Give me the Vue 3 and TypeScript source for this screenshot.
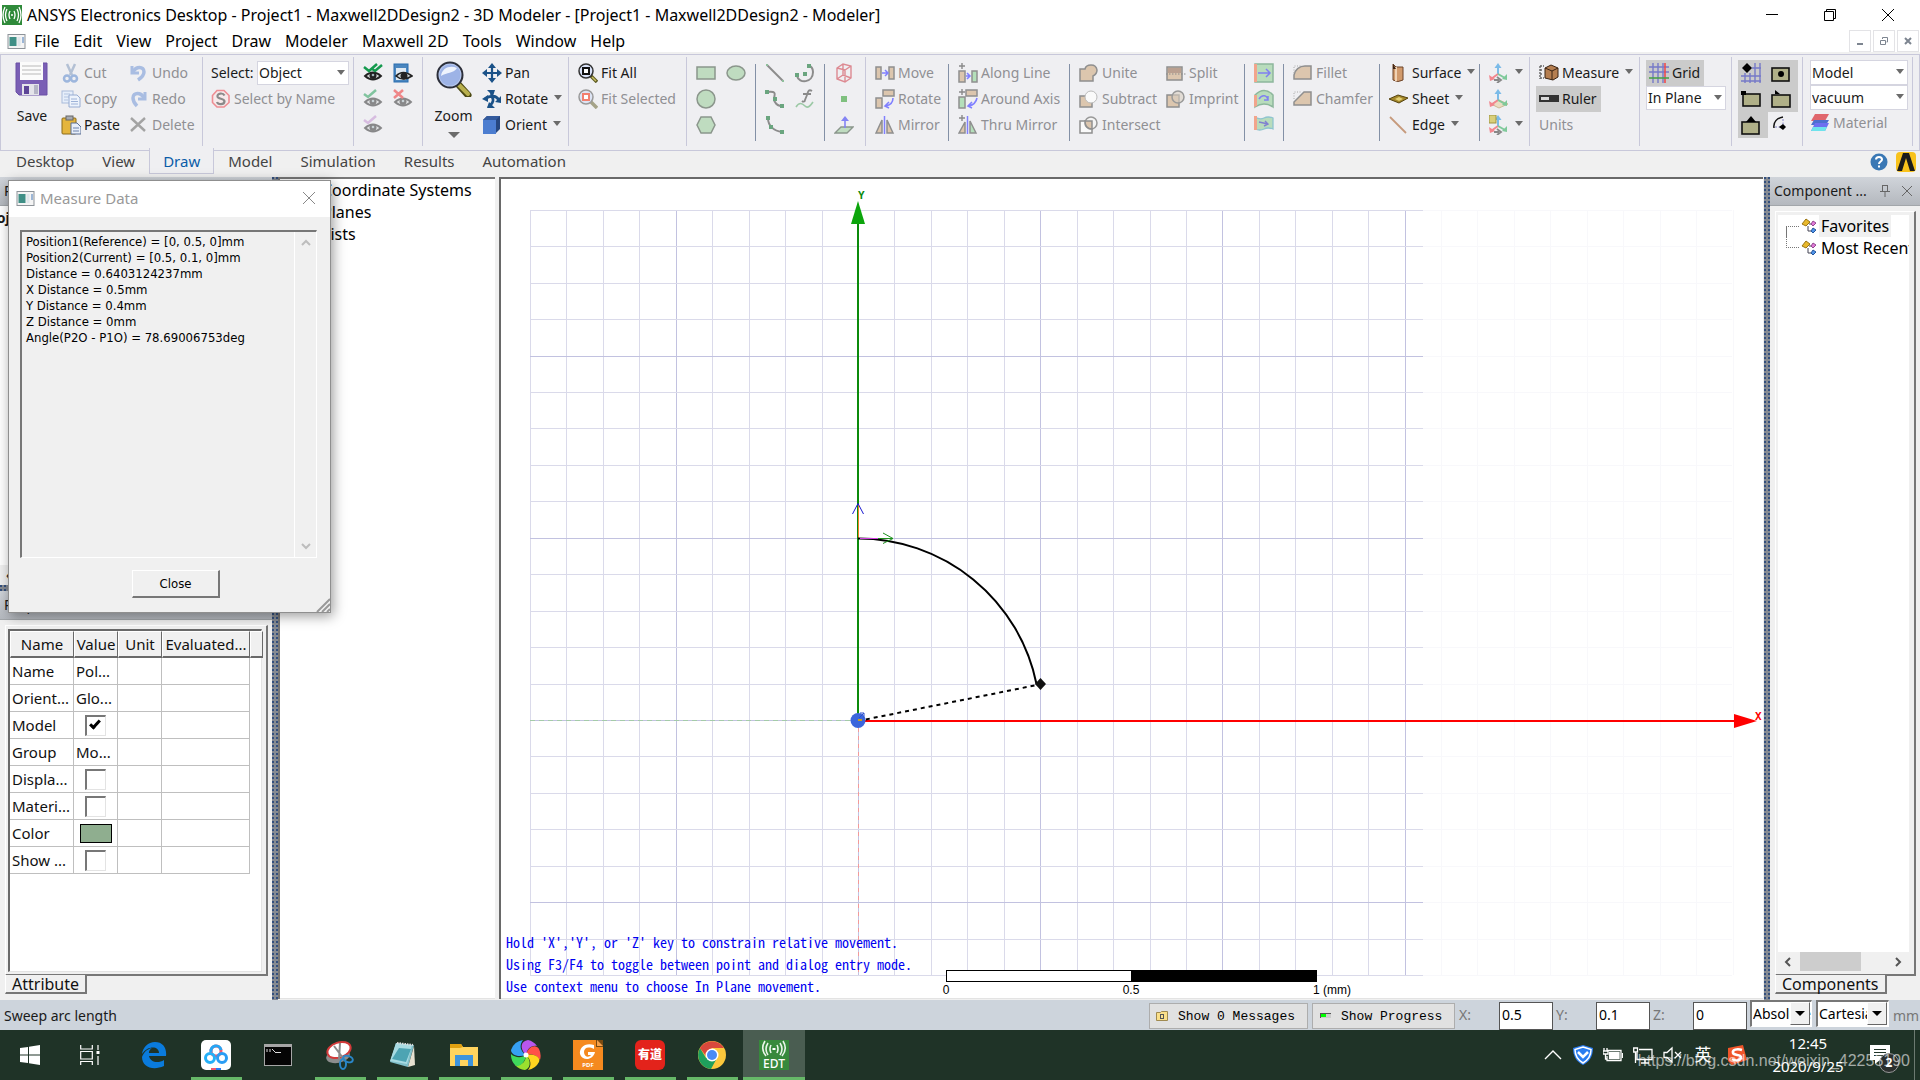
<script setup lang="ts">
import { ref } from 'vue'

interface Item {
  icon?: string
  label?: string
  off?: boolean
  arrow?: boolean
  on?: boolean
}
interface Segment {
  name: string
  sep: 'light' | 'dark'
  cols: Item[][]
}

const shape = 'fill="#bfdcc0" stroke="#8b968c" stroke-width="1.5"'
const tan = 'fill="#dcc6ae" stroke="#8f8f8f" stroke-width="1.5"'
const mint = 'fill="#b4dfba" stroke="#8f8f8f" stroke-width="1.5"'
const plus = '<path d="M1 3h6M4 0v6" stroke="#8a8a8a" stroke-width="1.4"/>'
const eye =
  '<path d="M2 13Q10 6 18 13Q10 20 2 13Z" fill="#d5d8d8" stroke="#222" stroke-width="1.8"/><circle cx="10" cy="12.500" r="3.500" fill="#222"/><circle cx="10" cy="12" r="1.300" fill="#9fb2b8"/>'
const triad =
  '<path d="M9 11V2" stroke-width="2" fill="none" stroke="#7bbbe8"/><path d="M5.500 5L9 0L12.500 5Z" fill="#7bbbe8"/><path d="M9 11L2 16" stroke="#f2868e" stroke-width="2"/><path d="M0 12L1 18L6 16Z" fill="#f2868e"/><path d="M9 11L16 15" stroke="#7fc99a" stroke-width="2"/><path d="M18 11V17L13 16Z" fill="#7fc99a"/>'

const icons: Record<string, string> = {
  save: '<path d="M2 2H33V34H5L2 31Z" fill="#7a5fb5"/><path d="M2 2H33V34H5L2 31Z" fill="none" stroke="#6a50a5"/><rect x="6" y="1" width="23" height="18" fill="#fbfbfb"/><path d="M8 5H27M8 9H27M8 13H27" stroke="#cfcfcf" stroke-width="1.500"/><rect x="8" y="23" width="17" height="11" fill="#e4e4ea"/><rect x="10" y="25" width="5" height="8" fill="#5d4597"/><rect x="20" y="24" width="4" height="9" fill="#b5b5c6"/>',
  zoomBig:
    '<path d="M22 23L32 34" stroke="#4d4a14" stroke-width="7" stroke-linecap="round"/><path d="M23 24L32 33" stroke="#b9b04e" stroke-width="4" stroke-linecap="round"/><circle cx="14" cy="14" r="12.500" fill="#b7c8ee" stroke="#2c2f3a" stroke-width="2"/><circle cx="14" cy="14" r="10.500" fill="#9db3e6"/><path d="M5 15C6 7 14 4 21 7C17 13 11 11 5 15Z" fill="#eef3fd"/>',
  cut: '<path d="M6 1L11 12M14 1L9 12" stroke="#b3c0d4" stroke-width="2.500"/><circle cx="6" cy="15.500" r="3" fill="none" stroke="#9db6dd" stroke-width="2.500"/><circle cx="13" cy="15.500" r="3" fill="none" stroke="#9db6dd" stroke-width="2.500"/>',
  copy: '<rect x="1" y="2" width="11" height="12" fill="#e6eefa" stroke="#a9bbda"/><path d="M3 5H9M3 8H8M3 11H7" stroke="#b2c3df"/><path d="M8 6H16L19 9V18H8Z" fill="#edf3fc" stroke="#97acd2"/><path d="M10 10H16M10 12.500H17M10 15H17" stroke="#9db2d8"/>',
  paste:
    '<rect x="1" y="3" width="14" height="16" rx="1" fill="#e5b53d" stroke="#8a6a1b"/><rect x="5" y="1" width="7" height="4" fill="#a7aab0" stroke="#666"/><path d="M10 8H16L20 12V19H10Z" fill="#e8eef9" stroke="#5b6f93"/><path d="M12 13H18M12 16H18" stroke="#6c83ad"/>',
  undo: '<path d="M3 3V10H10" fill="none" stroke="#a9bde2" stroke-width="3"/><path d="M4 9C7 3 15 3 15 9C15 13 12 15 9 17" fill="none" stroke="#a9bde2" stroke-width="3.500"/>',
  redo: '<path d="M16 3V10H9" fill="none" stroke="#a9bde2" stroke-width="3"/><path d="M15 9C12 3 4 3 4 9C4 13 6 15 8 17" fill="none" stroke="#a9bde2" stroke-width="3.500"/>',
  del: '<path d="M2 3L16 16M16 3L2 16" stroke="#a3a3a3" stroke-width="2.400"/>',
  byName:
    '<path d="M6 1.500H13L18 6.500V13.500L13 18H6L1.500 13.500V6.500Z" fill="#f6e9ea" stroke="#ee8d93" stroke-width="1.600"/><path d="M13.500 6.500C12 3.500 6 4 6.500 7.500C7 10.500 13.500 9 13.500 12.500C13 16 7 16 6 13" fill="none" stroke="#8a8a8a" stroke-width="2.200"/>',
  eyeAll: eye + '<path d="M1 4L6 8L14 1M8 5L12 8L19 2" fill="none" stroke="#159a4e" stroke-width="2.500"/>',
  eyeWin:
    '<rect x="1" y="1" width="14" height="18" fill="#4a86bf" stroke="#2a6fb0"/><rect x="3" y="5" width="10" height="12" fill="#dfe9f2"/><path d="M3 13Q10 6 19 13Q10 19 3 13Z" fill="#cfd6d8" stroke="#222" stroke-width="1.600"/><circle cx="11" cy="13" r="3.500" fill="#222"/>',
  eyeOn: `<g opacity=".5">${eye}<path d="M1 5L5 8L13 1" fill="none" stroke="#159a4e" stroke-width="2.500"/></g>`,
  eyeOff: `<g opacity=".5">${eye}<path d="M1 1L10 9M10 1L1 9" stroke="#f02020" stroke-width="2.500"/></g>`,
  eyeMix: `<g opacity=".5">${eye}<path d="M1 5L5 8L13 1" fill="none" stroke="#c08ad0" stroke-width="2.500"/></g>`,
  pan: '<path d="M10 2V18M2 10H18" stroke="#1b5288" stroke-width="2.200"/><path d="M6 5L10 0L14 5ZM6 15L10 20L14 15ZM5 6L0 10L5 14ZM15 6L20 10L15 14Z" fill="#1b5288"/>',
  rotate:
    '<path d="M11 2C7 5 12 9 11 12C10 16 7 16 7 18M3 10C8 6 14 6 17 11" fill="none" stroke="#1b5288" stroke-width="2.800"/><path d="M5 1H13L11 7ZM5 19L13 19L7 13ZM0 10L6 6V13ZM19 7V14L13 13Z" fill="#1b5288"/>',
  orient: '<path d="M1 5L5 1H18V14L14 18H1Z" fill="#27477f"/><rect x="1" y="5" width="13" height="14" fill="#4c7dd0"/><path d="M1 5L5 1H18L14 5Z" fill="#345b9e"/>',
  fitAll:
    '<path d="M13 13L19 19" stroke="#5d5a22" stroke-width="3.500"/><path d="M14 14L18 18" stroke="#c9bf63" stroke-width="1.500"/><circle cx="8" cy="8" r="7" fill="#d9e2f8" stroke="#333" stroke-width="1.500"/><rect x="5" y="5" width="6" height="6" fill="#fff" stroke="#111" stroke-width="2"/>',
  fitSel:
    '<path d="M13 13L19 19" stroke="#a5a388" stroke-width="3.500"/><circle cx="8" cy="8" r="7" fill="#dde4f4" stroke="#999" stroke-width="1.500"/><rect x="5" y="5" width="6" height="6" fill="#fff" stroke="#f28070" stroke-width="2"/>',
  rect: `<rect x="1" y="4" width="18" height="12" ${shape}/>`,
  ellipse: `<ellipse cx="10" cy="10" rx="9" ry="7" ${shape}/>`,
  circle: `<circle cx="10" cy="10" r="9" ${shape}/>`,
  hexagon: `<path d="M5 2H15L19 10L15 18H5L1 10Z" ${shape}/>`,
  line: '<path d="M2 2L18 18" stroke="#8c8c8c" stroke-width="2"/><path d="M1 1h2v2H1zM17 17h2v2h-2z" fill="#8fbf9c"/>',
  arc3: '<path d="M2 13C4 21 18 20 18 9C18 6 16 3 13 2" fill="none" stroke="#8c8c8c" stroke-width="2"/><path d="M0 10h4v4H0zM8 9h4v4H8zM12 1h4v4h-4z" fill="#6aa57f"/>',
  spline: '<path d="M2 3C16 1 6 9 10 13C11 15 14 17 17 17" fill="none" stroke="#8c8c8c" stroke-width="2"/><path d="M0 1h4v4H0zM8 8h4v4H8zM15 15h4v4h-4z" fill="#6aa57f"/>',
  func: '<path d="M17 2C14 0 13 2 12 6L10 11C10 13 8 13 7 12M8 5H16" fill="none" stroke="#8a8a8a" stroke-width="1.800"/><path d="M1 18C4 13 7 14 10 17C13 20 16 16 18 13" fill="none" stroke="#9cc9a6" stroke-width="1.600"/>',
  arc: '<path d="M3 3C3 11 9 16 17 17" fill="none" stroke="#8c8c8c" stroke-width="2"/><path d="M1 1h4v4H1zM4 10h4v4H4zM15 15h4v4h-4z" fill="#6aa57f"/>',
  box: '<path d="M3 5L9 1L17 3V15L11 19L3 16ZM3 5L11 7L17 3M11 7V19M3 16L9 12L17 15M9 1V12" fill="none" stroke="#dd8a92" stroke-width="1.400"/>',
  point: '<rect x="7" y="7" width="6" height="6" fill="#7fc07f"/>',
  plane: '<path d="M7 12H19L13 18H1Z" fill="#bfdcc0" stroke="#8b968c" stroke-width="1.300"/><path d="M11 13V3" stroke="#8484f4" stroke-width="1.600"/><path d="M7 6L11 1L15 6Z" fill="#8484f4"/>',
  move: `<rect x="1" y="4" width="5" height="12" ${tan}/><rect x="14" y="4" width="5" height="12" ${tan}/><path d="M7 10H12M10 7L13 10L10 13" fill="none" stroke="#8080ff" stroke-width="1.500"/>`,
  rot: `<rect x="1" y="9" width="6" height="10" ${tan}/><rect x="8" y="1" width="11" height="6" ${tan}/><path d="M18 9C18 14 15 16 11 17M14 13L10 17L14 19" fill="none" stroke="#8080ff" stroke-width="1.600"/>`,
  mirror: `<path d="M1 18L7 5V18Z" ${tan}/><path d="M18 18L12 5V18Z" ${tan}/><path d="M9.500 1V19" stroke="#8080ff" stroke-width="1.500"/>`,
  along: `${plus}<rect x="1" y="8" width="6" height="11" ${tan}/><rect x="14" y="8" width="5" height="11" ${mint}/><path d="M8 13H12M9 10L12 13L9 16" fill="none" stroke="#8080ff" stroke-width="1.600"/>`,
  around: `${plus}<rect x="1" y="8" width="6" height="11" ${mint}/><rect x="8" y="1" width="11" height="6" ${tan}/><path d="M19 9C18 14 15 16 11 17M14 13L10 17L14 19" fill="none" stroke="#8080ff" stroke-width="1.600"/>`,
  thru: `${plus}<path d="M1 18L7 7V18Z" ${tan}/><path d="M18 18L12 6V18Z" ${mint}/><path d="M9.500 1V19" stroke="#8080ff" stroke-width="1.500"/>`,
  unite: `<path d="M1 6H6C7 1 17 0 18 7C18 11 16 12 14 13V18H1Z" ${tan}/>`,
  subtract: `<rect x="1" y="7" width="12" height="11" ${tan}/><circle cx="12" cy="8" r="6" fill="#fafafa" stroke="#bbb"/>`,
  intersect: `<rect x="1" y="6" width="12" height="12" fill="#fafafa" stroke="#8f8f8f" stroke-width="1.500"/><circle cx="12" cy="8" r="6" fill="#f4f4f4" stroke="#999" stroke-width="1.500"/><path d="M6 6H13V14C9 14 6 11 6 6Z" ${tan}/>`,
  split: `<rect x="1" y="4" width="15" height="13" ${tan}/><rect x="2" y="5" width="13" height="5" fill="#baa090"/><path d="M0 11H20" stroke="#8a8a8a" stroke-dasharray="1.500 1.500"/>`,
  imprint: `<rect x="1" y="6" width="12" height="12" ${tan}/><circle cx="12" cy="8" r="6" fill="#d8cfc2" fill-opacity=".6" stroke="#999" stroke-width="1.500"/>`,
  sweepV: '<rect x="1" y="1" width="18" height="18" fill="#b8dcbc" stroke="#8db79c" stroke-width="1.500"/><rect x="0" y="1" width="3" height="18" fill="#f2a58c"/><path d="M4 10H16M12 6L16 10L12 14" fill="none" stroke="#8080f0" stroke-width="1.500"/>',
  sweepA: '<path d="M1 6Q10 -3 19 6V18Q10 12 1 18Z" fill="#b8dcbc" stroke="#8db79c" stroke-width="1.500"/><path d="M0 6H3V17L0 18Z" fill="#f2a58c"/><path d="M5 10C8 5 13 6 14 11M14 7V11H10" fill="none" stroke="#8080f0" stroke-width="1.500"/>',
  sweepP: '<path d="M1 2Q6 5 10 3T19 3V14Q14 12 10 14T1 14Z" fill="#b8dcbc" stroke="#8fc4cf" stroke-width="1.300"/><path d="M0 1H3V15H0Z" fill="#f2a58c"/><path d="M5 7L14 9M11 6L14 9L10 11" fill="none" stroke="#8080d0" stroke-width="1.400"/>',
  fillet: `<path d="M1 16V12C2 7 6 3 12 3H18V16Z" ${tan}/><path d="M1 10V3H8" fill="none" stroke="#aaa" stroke-dasharray="1 1.500"/>`,
  chamfer: `<path d="M1 16V13L11 3H18V16Z" ${tan}/><path d="M1 10V3H8" fill="none" stroke="#aaa" stroke-dasharray="1 1.500"/>`,
  surface: '<path d="M4 1L7 4H14V17Q9 20 4 17Z" fill="#d19a6c" stroke="#6d452a"/><path d="M7 4V18" stroke="#f1d3b4" stroke-width="2"/><path d="M4 1V6H7" fill="#3b2212"/>',
  sheet: '<path d="M0 10L9 6L19 9L10 14Z" fill="#a3872a" stroke="#54420e"/><path d="M6 10L10 8L14 10L10 12Z" fill="#e3cf72"/>',
  edge: '<path d="M1 2L17 18" stroke="#c69a7c" stroke-width="1.800"/>',
  cs1: triad + '<path d="M5 17H10M8 14L12 17L8 20" fill="none" stroke="#888" stroke-width="1.800"/>',
  cs2: '<path d="M2 15L10 11L19 15L10 19Z" fill="#eadcc2" stroke="#cdb993"/>' + triad,
  cs3: triad + '<rect x="0" y="0" width="7" height="8" fill="#d9cf7a" stroke="#9e9540"/><path d="M5 17H10M8 14L12 17L8 20" fill="none" stroke="#888" stroke-width="1.800"/>',
  measure:
    '<path d="M1 3V16M1 3H5M1 7H4M1 11H4M1 15H5" stroke="#666" stroke-width="1.400" stroke-dasharray="2 1"/><path d="M6 5L12 2L19 5V14L14 17L6 15Z" fill="#b57e50" stroke="#3a2414"/><path d="M6 5L13 8L19 5M13 8V17" fill="none" stroke="#3a2414"/>',
  ruler: '<rect x="0" y="6" width="20" height="7" fill="#333"/><rect x="2" y="8" width="8" height="3" fill="#d8d8d8"/>',
  grid: '<path d="M0 4H20M0 9H20M4 0V20M9 0V20M14 0V20" stroke="#7679c8" stroke-width="1.400"/><path d="M16 0V20" stroke="#ee4b4b" stroke-width="1.600"/><path d="M0 15H20" stroke="#4aa04a" stroke-width="1.600"/>',
  snapGrid: '<path d="M0 13H20M0 18H20M11 5H20M9 10V20M14 0V20M19 0V20M4 10V20" stroke="#7679c8" stroke-width="1.400"/><path d="M6 0L11 5L6 10L1 5Z" fill="#000"/>',
  snapCenter: '<rect x="1" y="5" width="17" height="13" fill="#b0b088" stroke="#111" stroke-width="1.600"/><circle cx="10" cy="11" r="3" fill="#000"/>',
  snapVertex: '<rect x="2" y="5" width="17" height="12" fill="#b0b088" stroke="#111" stroke-width="1.600"/><rect x="0" y="2" width="5" height="4" fill="#000"/>',
  snapEdge: '<rect x="1" y="6" width="18" height="12" fill="#b0b088" stroke="#111" stroke-width="1.600"/><path d="M4 1L9 5H4Z" fill="#000"/>',
  snapFace: '<rect x="1" y="7" width="17" height="12" fill="#b0b088" stroke="#111" stroke-width="1.600"/><path d="M10 1L15 7H5Z" fill="#000"/>',
  snapArc: '<path d="M3 13C2 7 6 3 12 2" fill="none" stroke="#111" stroke-width="1.500"/><path d="M4 12H12V4" fill="none" stroke="#8888cc" stroke-dasharray="2 1.500"/><path d="M8 12L12 9L15 12L12 15Z" fill="#000"/>',
  material:
    '<path d="M1 8L5 1H19L15 8Z" fill="#e0666c"/><path d="M1 12L4 7H19L16 12Z" fill="#4d6fd0"/><path d="M1 18L5 10H19L15 18Z" fill="#6d6ff0"/><path d="M1 18L3 14H17L15 18Z" fill="#6fe3ec"/>',
}

const segments: Segment[] = [
  {
    name: 'clip', sep: 'light',
    cols: [
      [{ icon: 'cut', label: 'Cut', off: true }, { icon: 'copy', label: 'Copy', off: true }, { icon: 'paste', label: 'Paste' }],
      [{ icon: 'undo', label: 'Undo', off: true }, { icon: 'redo', label: 'Redo', off: true }, { icon: 'del', label: 'Delete', off: true }],
    ],
  },
  { name: 'select', sep: 'light', cols: [] },
  { name: 'vis', sep: 'light', cols: [[{ icon: 'eyeAll' }, { icon: 'eyeOn' }, { icon: 'eyeMix' }], [{ icon: 'eyeWin' }, { icon: 'eyeOff' }]] },
  { name: 'zoom', sep: 'light', cols: [[{ icon: 'pan', label: 'Pan' }, { icon: 'rotate', label: 'Rotate', arrow: true }, { icon: 'orient', label: 'Orient', arrow: true }]] },
  { name: 'fit', sep: 'light', cols: [[{ icon: 'fitAll', label: 'Fit All' }, { icon: 'fitSel', label: 'Fit Selected', off: true }]] },
  { name: 'shapes', sep: 'dark', cols: [[{ icon: 'rect' }, { icon: 'circle' }, { icon: 'hexagon' }], [{ icon: 'ellipse' }]] },
  { name: 'lines', sep: 'dark', cols: [[{ icon: 'line' }, { icon: 'spline' }, { icon: 'arc' }], [{ icon: 'arc3' }, { icon: 'func' }]] },
  { name: 'solids', sep: 'light', cols: [[{ icon: 'box' }, { icon: 'point' }, { icon: 'plane' }]] },
  { name: 'move', sep: 'dark', cols: [[{ icon: 'move', label: 'Move', off: true }, { icon: 'rot', label: 'Rotate', off: true }, { icon: 'mirror', label: 'Mirror', off: true }]] },
  { name: 'along', sep: 'dark', cols: [[{ icon: 'along', label: 'Along Line', off: true }, { icon: 'around', label: 'Around Axis', off: true }, { icon: 'thru', label: 'Thru Mirror', off: true }]] },
  {
    name: 'bool', sep: 'dark',
    cols: [
      [{ icon: 'unite', label: 'Unite', off: true }, { icon: 'subtract', label: 'Subtract', off: true }, { icon: 'intersect', label: 'Intersect', off: true }],
      [{ icon: 'split', label: 'Split', off: true }, { icon: 'imprint', label: 'Imprint', off: true }],
    ],
  },
  { name: 'sweep', sep: 'dark', cols: [[{ icon: 'sweepV' }, { icon: 'sweepA' }, { icon: 'sweepP' }]] },
  { name: 'fillet', sep: 'dark', cols: [[{ icon: 'fillet', label: 'Fillet', off: true }, { icon: 'chamfer', label: 'Chamfer', off: true }]] },
  { name: 'surface', sep: 'dark', cols: [[{ icon: 'surface', label: 'Surface', arrow: true }, { icon: 'sheet', label: 'Sheet', arrow: true }, { icon: 'edge', label: 'Edge', arrow: true }]] },
  { name: 'cs', sep: 'light', cols: [[{ icon: 'cs1', arrow: true }, { icon: 'cs2' }, { icon: 'cs3', arrow: true }]] },
  { name: 'measure', sep: 'light', cols: [[{ icon: 'measure', label: 'Measure', arrow: true }, { icon: 'ruler', label: 'Ruler', on: true }, { label: 'Units', off: true }]] },
  { name: 'grid', sep: 'light', cols: [[{ icon: 'grid', label: 'Grid', on: true }]] },
  {
    name: 'snap', sep: 'light',
    cols: [
      [{ icon: 'snapGrid', on: true }, { icon: 'snapVertex', on: true }, { icon: 'snapFace', on: true }],
      [{ icon: 'snapCenter', on: true }, { icon: 'snapEdge', on: true }, { icon: 'snapArc' }],
    ],
  },
  { name: 'model', sep: 'light', cols: [] },
]

const menus = ['File', 'Edit', 'View', 'Project', 'Draw', 'Modeler', 'Maxwell 2D', 'Tools', 'Window', 'Help']
const tabs = ['Desktop', 'View', 'Draw', 'Model', 'Simulation', 'Results', 'Automation']
const activeTab = ref('Draw')

const measure = ref(
  [
    'Position1(Reference) = [0, 0.5, 0]mm',
    'Position2(Current) = [0.5, 0.1, 0]mm',
    'Distance = 0.6403124237mm',
    'X Distance = 0.5mm',
    'Y Distance = 0.4mm',
    'Z Distance = 0mm',
    'Angle(P2O - P1O) = 78.69006753deg',
  ].join('\n'),
)

interface Prop {
  name: string
  kind: 'text' | 'check' | 'color'
  value?: string
  checked?: boolean
}
const props: Prop[] = [
  { name: 'Name', kind: 'text', value: 'Pol...' },
  { name: 'Orient...', kind: 'text', value: 'Glo...' },
  { name: 'Model', kind: 'check', checked: true },
  { name: 'Group', kind: 'text', value: 'Mo...' },
  { name: 'Displa...', kind: 'check', checked: false },
  { name: 'Materi...', kind: 'check', checked: false },
  { name: 'Color', kind: 'color' },
  { name: 'Show ...', kind: 'check', checked: false },
]

// Grid of the drawing area: origin, cell size and the extents of the two tints.
const ox = 858
const oy = 720
const cell = 36.44
const span = (from: number, to: number) => Array.from({ length: to - from + 1 }, (_, i) => from + i)
const at = (o: number, i: number) => Math.round(o + i * cell) + 0.5
const vLines = span(-9, 15).map((i) => ({ x: at(ox, i), major: i % 5 === 0 }))
const vFaint = span(16, 24).map((i) => at(ox, i))
const hLines = span(-14, 7).map((i) => ({ y: at(oy, i), major: i % 5 === 0 }))

const coords = ref([
  { axis: 'X', value: '0.5' },
  { axis: 'Y', value: '0.1' },
  { axis: 'Z', value: '0' },
])

const apps: { name: string; art: string; open?: boolean; active?: boolean }[] = [
  { name: 'Edge', art: '<path d="M3 14C4 7 9 2 16 2C24 2 28 8 27 16H10C11 22 19 24 25 20V26C14 31 3 27 3 17C5 12 8 9 13 8C10 10 10 12 10 13H20C20 6 9 5 3 14Z" fill="#0a7bdc"/>' },
  { name: 'Netdisk', open: true, art: '<rect width="30" height="30" rx="5" fill="#fff"/><circle cx="15" cy="11" r="5" fill="none" stroke="#f25a6f" stroke-width="3"/><path d="M10 12A5 5 0 1 1 20 10" fill="none" stroke="#25a6f5" stroke-width="3"/><circle cx="9" cy="18" r="4.500" fill="none" stroke="#25b0f8" stroke-width="3"/><circle cx="21" cy="18" r="4.500" fill="none" stroke="#2a9df4" stroke-width="3"/><path d="M10 28H15V30H10Z" fill="#f25a6f"/><path d="M15 28H20V30H15Z" fill="#2a7df4"/>' },
  { name: 'Command Prompt', art: '<rect x="1" y="4" width="28" height="22" fill="#a6a6a6"/><rect x="2" y="7" width="26" height="18" fill="#050505"/><path d="M4 9V12M7 9V12M9 9L12 12M12 12.500H18" stroke="#ddd"/>' },
  { name: 'Snipping Tool', open: true, art: '<ellipse cx="13" cy="16" rx="12" ry="7" fill="#8d8d8d" transform="rotate(-12 13 16)"/><ellipse cx="14" cy="10" rx="12" ry="7.500" fill="#fff" stroke="#d23a3a" stroke-width="2" transform="rotate(-18 14 10)"/><path d="M9 6L18 18M15 3L14 20" stroke="#8a8a8a" stroke-width="2"/><ellipse cx="23" cy="19" rx="5" ry="3" fill="none" stroke="#2a86c8" stroke-width="2" transform="rotate(20 23 19)"/><ellipse cx="18" cy="24" rx="3" ry="5" fill="none" stroke="#2a86c8" stroke-width="2"/>' },
  { name: 'Notepad', open: true, art: '<path d="M9 3L27 5L21 27L3 22Z" fill="#7fbfc9"/><path d="M9 3L25 5L20 24L3 21Z" fill="#a8dbe2"/><path d="M12 8L24 9L19 22L5 19Z" fill="#4da4b3"/><path d="M27 6L28 25L21 27Z" fill="#e6e1d0"/><path d="M10 3L26 5" stroke="#ddd" stroke-width="2" stroke-dasharray="1.500 1"/>' },
  { name: 'File Explorer', open: true, art: '<path d="M1 4H12L14 7H29V26H1Z" fill="#ffd45e"/><path d="M1 4H12L14 7L11 8H1Z" fill="#e0a010"/><path d="M6 26V15H24V26H19V20H11V26Z" fill="#3d94dc"/>' },
  { name: 'Browser', open: true, art: '<path d="M15 15C8 8 10 1 17 0A15 15 0 0 1 26 6C20 5 16 9 15 15Z" fill="#b857ee"/><path d="M15 15C17 6 25 4 28 9A15 15 0 0 1 29 20C26 15 20 13 15 15Z" fill="#ff5148"/><path d="M15 15C24 13 30 18 28 22A15 15 0 0 1 17 30C21 26 20 19 15 15Z" fill="#ffd51f"/><path d="M15 15C21 21 19 29 14 30A15 15 0 0 1 4 25C10 26 15 22 15 15Z" fill="#9be02e"/><path d="M15 15C14 24 7 28 4 25A15 15 0 0 1 0 14C4 18 11 18 15 15Z" fill="#3fd95c"/><path d="M15 15C6 18 0 14 0 10A15 15 0 0 1 12 0C8 5 9 11 15 15Z" fill="#36a0f2"/><circle cx="15" cy="15" r="2.500" fill="#fff"/>' },
  { name: 'PDF Reader', open: true, art: '<rect width="30" height="30" fill="#f58a1f"/><path d="M23 0H30V7H23Z" fill="#7a4a10"/><path d="M24 0L30 6H24Z" fill="#f5a04a"/><path d="M21 5C12 2 6 8 7 14C9 21 20 21 22 12H15V15H18C16 18 11 17 11 12C11 8 15 6 21 9Z" fill="#fff"/><text x="15" y="27" text-anchor="middle" font-family="Open Sans, sans-serif" font-weight="700" font-size="6" fill="#fff">PDF</text>' },
  { name: 'Youdao', open: true, art: '<rect width="30" height="30" rx="6" fill="#e3231b"/><text x="15" y="19" text-anchor="middle" font-family="Noto Sans CJK SC, sans-serif" font-weight="900" font-size="12" fill="#fff">有道</text>' },
  { name: 'Chrome', open: true, art: '<circle cx="15" cy="15" r="14" fill="#fbc83c"/><path d="M3 8A14 14 0 0 0 14 29L20 18L9 18Z" fill="#1fa05c"/><path d="M2.900 8A14 14 0 0 1 27 8L15 8L9 16Z" fill="#d8483c"/><circle cx="15" cy="15" r="6.500" fill="#fff"/><circle cx="15" cy="15" r="5" fill="#4a8af4"/>' },
  { name: 'EDT', open: true, active: true, art: '<rect width="30" height="30" fill="#37893c"/><g fill="none" stroke="#e8f5e8" stroke-width="1.600"><path d="M12 5Q10 9 12 13M9 3Q5 9 9 15M6 1Q1 9 7 16M18 5Q20 9 18 13M21 3Q25 9 21 15M24 1Q29 9 23 16"/></g><path d="M13.500 9H16.500" stroke="#fff" stroke-width="2"/><text x="15" y="28" text-anchor="middle" font-family="Noto Sans, sans-serif" font-weight="500" font-size="12" fill="#fff">EDT</text>' },
]
</script>

<template>
  <div class="desktop">
    <header class="titlebar">
      <svg class="logo" viewBox="0 0 20 20" aria-hidden="true">
        <rect width="20" height="20" fill="#2f8a3a" />
        <g fill="none" stroke="#fff" stroke-width="1.3">
          <path d="M8 6Q6 10 8 14M5 4Q2 10 5 16M3 2Q-1 10 3 18M12 6Q14 10 12 14M15 4Q18 10 15 16M17 2Q21 10 17 18M9 10H11" />
        </g>
      </svg>
      <h1>ANSYS Electronics Desktop - Project1 - Maxwell2DDesign2 - 3D Modeler - [Project1 - Maxwell2DDesign2 - Modeler]</h1>
      <div class="wincaps">
        <button aria-label="Minimize"><svg viewBox="0 0 14 14"><path d="M1 6.5H13" /></svg></button>
        <button aria-label="Restore"><svg viewBox="0 0 14 14"><path d="M1.500 3.500H10.500V12.500H1.500ZM3.500 3V1.500H12.500V10.500H11" /></svg></button>
        <button aria-label="Close window"><svg viewBox="0 0 14 14"><path d="M1 1L13 13M13 1L1 13" /></svg></button>
      </div>
    </header>

    <nav class="menubar">
      <svg class="doc" viewBox="0 0 18 15" aria-hidden="true">
        <rect x=".5" y=".5" width="17" height="14" fill="#f4f4f4" stroke="#8d9399" />
        <rect x="2" y="3" width="7" height="9" fill="#3f8f86" />
        <path d="M10 3H13V12H10Z" fill="#dfe6ea" /><path d="M15.500 3V9" stroke="#4478b8" />
      </svg>
      <button v-for="m in menus" :key="m" class="menu">{{ m }}</button>
      <div class="mdi">
        <button aria-label="Minimize document"><svg viewBox="0 0 10 10"><path d="M2 8H8" stroke-width="2" /></svg></button>
        <button aria-label="Restore document"><svg viewBox="0 0 10 10"><path d="M1.500 4.500H6.500V8.500H1.500ZM3.500 3V1.500H8.500V6H7.500" /></svg></button>
        <button aria-label="Close document"><svg viewBox="0 0 10 10"><path d="M2 2L8 8M8 2L2 8" stroke-width="2" /></svg></button>
      </div>
    </nav>

    <section class="ribbon" aria-label="Ribbon">
      <template v-for="s in segments" :key="s.name">
        <div class="seg" :class="'seg-' + s.name">
          <button v-if="s.name === 'clip'" class="big">
            <svg viewBox="0 0 36 36" v-html="icons.save"></svg>
            <span>Save</span>
          </button>
          <button v-if="s.name === 'zoom'" class="big">
            <svg viewBox="0 0 36 36" v-html="icons.zoomBig"></svg>
            <span>Zoom</span>
            <i class="caret wide"></i>
          </button>
          <div v-if="s.name === 'select'" class="col">
            <div class="selrow">
              <label for="sel-kind">Select:</label>
              <span class="combo kind"><select id="sel-kind"><option>Object</option></select></span>
            </div>
            <button class="item off"><svg viewBox="0 0 20 20" v-html="icons.byName"></svg><span>Select by Name</span></button>
          </div>
          <div v-if="s.name === 'model'" class="col">
            <span class="combo tall"><select aria-label="Model kind"><option>Model</option></select></span>
            <span class="combo tall"><select aria-label="Material name"><option>vacuum</option></select></span>
            <button class="item off"><svg viewBox="0 0 20 20" v-html="icons.material"></svg><span>Material</span></button>
          </div>
          <div v-for="(c, ci) in s.cols" :key="ci" class="col">
            <button v-for="(b, bi) in c" :key="bi" class="item" :class="{ off: b.off, on: b.on }" :aria-label="b.label ?? b.icon">
              <svg v-if="b.icon" viewBox="0 0 20 20" v-html="icons[b.icon]"></svg>
              <span v-if="b.label">{{ b.label }}</span>
              <i v-if="b.arrow" class="caret"></i>
            </button>
            <span v-if="s.name === 'grid'" class="combo plane"><select aria-label="Grid plane"><option>In Plane</option></select></span>
          </div>
        </div>
        <i class="sep" :class="s.sep"></i>
      </template>
    </section>

    <nav class="tabs">
      <button v-for="t in tabs" :key="t" :class="{ active: t === activeTab }" @click="activeTab = t">{{ t }}</button>
      <div class="brand">
        <svg viewBox="0 0 20 20" aria-label="Help">
          <circle cx="10" cy="10" r="8.500" fill="#3a78b5" />
          <path d="M7 7.500C7 4 13 4 13 7.500C13 9.500 10 9.500 10 12M10 13.500V15.500" fill="none" stroke="#fff" stroke-width="2" />
        </svg>
        <svg viewBox="0 0 20 20" aria-label="ANSYS">
          <rect width="20" height="20" rx="4" fill="#f8c21c" />
          <path d="M1 19L7 1H13L19 19H14L10 6L6 19Z" fill="#1b1b1b" />
        </svg>
      </div>
    </nav>

    <main class="work">
      <aside class="left">
        <h2 class="dockhead">Project Manager</h2>
        <div class="projtree"><b>Project1</b></div>
        <div class="hscroll"><span>‹</span></div>
        <div class="hsplit"></div>
        <h2 class="dockhead">Properties</h2>
        <div class="propwrap">
          <div class="propframe">
            <div class="propview">
              <table>
                <thead>
                  <tr><th>Name</th><th>Value</th><th>Unit</th><th>Evaluated...</th><th class="rest"></th></tr>
                </thead>
                <tbody>
                  <tr v-for="p in props" :key="p.name">
                    <td>{{ p.name }}</td>
                    <td v-if="p.kind === 'text'">{{ p.value }}</td>
                    <td v-else class="mid">
                      <input v-if="p.kind === 'check'" type="checkbox" :checked="p.checked" :aria-label="p.name" />
                      <span v-else class="swatch"></span>
                    </td>
                    <td></td>
                    <td></td>
                    <td class="none"></td>
                  </tr>
                </tbody>
              </table>
            </div>
          </div>
          <button class="foottab">Attribute</button>
        </div>
      </aside>
      <div class="vsplit"></div>
      <section class="objtree">
        <ul>
          <li>Coordinate Systems</li>
          <li>Planes</li>
          <li>Lists</li>
        </ul>
      </section>
      <section class="canvas">
        <svg viewBox="501 179 1261 820" preserveAspectRatio="xMinYMin meet" aria-label="Drawing area">
          <g stroke="#f8f8fb">
            <path v-for="x in vFaint" :key="x" :d="`M${x} 210V975`" />
            <path v-for="l in hLines" :key="l.y" :d="`M1423 ${l.y}H1732`" />
          </g>
          <g>
            <path v-for="l in vLines" :key="l.x" :d="`M${l.x} 210V975`" :stroke="l.major ? '#c2c2e0' : '#dadaea'" />
            <path v-for="l in hLines" :key="l.y" :d="`M530 ${l.y}H1423`" :stroke="l.major ? '#c2c2e0' : '#dadaea'" />
          </g>
          <path d="M530 720.500H858" stroke="#a4cba8" stroke-dasharray="5 4" />
          <path d="M858.500 728V975" stroke="#f29a9a" stroke-dasharray="4 4" />
          <path d="M858 720V222" stroke="#0b8a0b" stroke-width="2" />
          <path d="M851 224L858 201L865 224Z" fill="#0ca50c" />
          <path d="M858 721H1735" stroke="#f00" stroke-width="2" />
          <path d="M1734 714L1757 721L1734 728Z" fill="#f00" />
          <text class="axis" x="858" y="199" fill="#0b8a0b">Y</text>
          <text class="axis" x="1755" y="720" fill="#f00">X</text>
          <path d="M858.500 538V504" stroke="#f08020" />
          <path d="M852.500 514L858 503.500L863.500 514" fill="none" stroke="#1a1ad0" />
          <path d="M858 538.500A182 182 0 0 1 1036.500 684" fill="none" stroke="#000" stroke-width="2" />
          <path d="M860 538.500H878" stroke="#d040e0" />
          <path d="M878 538.500H893M883 533L893 538.500L883 543.500" fill="none" stroke="#1c901c" />
          <path d="M858 721L1037 685" stroke="#000" stroke-width="2" stroke-dasharray="4 4" />
          <path d="M1040.500 678L1046 684L1040.500 690L1035 684Z" fill="#111" />
          <circle cx="858" cy="720.500" r="7.500" fill="#3c66dc" />
          <path d="M860 713H864V718M864 713L859 718" fill="none" stroke="#2c50d0" />
          <path d="M858 720H862" stroke="#c8a020" stroke-width="2" />
          <rect x="946.500" y="970.500" width="370" height="11" fill="#fff" stroke="#000" />
          <rect x="1131" y="970" width="186" height="12" />
          <g class="scale">
            <text x="946" y="994" text-anchor="middle">0</text>
            <text x="1131" y="994" text-anchor="middle">0.5</text>
            <text x="1313" y="994">1 (mm)</text>
          </g>
          <g class="hints">
            <text x="506" y="948">Hold 'X','Y', or 'Z' key to constrain relative movement.</text>
            <text x="506" y="970">Using F3/F4 to toggle between point and dialog entry mode.</text>
            <text x="506" y="992">Use context menu to choose In Plane movement.</text>
          </g>
        </svg>
      </section>
      <div class="vsplit"></div>
      <aside class="right">
        <h2 class="dockhead">
          <span>Component ...</span>
          <svg viewBox="0 0 12 14" aria-label="Pin"><path d="M3 1.500H9M3.500 1V7M8.500 1V7M1 7.500H11M6 8V13" /></svg>
          <svg viewBox="0 0 12 12" aria-label="Close panel"><path d="M1 1L11 11M11 1L1 11" /></svg>
        </h2>
        <div class="compframe">
          <ul>
            <li v-for="(n, i) in ['Favorites', 'Most Recently Used']" :key="n" :class="{ first: i === 0 }">
              <svg viewBox="0 0 16 16" aria-hidden="true">
                <path d="M5 1L9 4L5 8L1 6Z" fill="#e8b82c" stroke="#9a7412" /><path d="M7 8V13H10M8 6H11" fill="none" stroke="#445" />
                <path d="M12 3L15 5L12 8L10 6Z" fill="#e07ad8" stroke="#934a90" /><path d="M12 10L15 12L12 15L10 13Z" fill="#4f93e8" stroke="#24569c" />
              </svg>
              <span>{{ n }}</span>
            </li>
          </ul>
          <div class="compscroll">
            <svg viewBox="0 0 8 12"><path d="M6 2L2 6L6 10" /></svg>
            <i></i>
            <svg viewBox="0 0 8 12"><path d="M2 2L6 6L2 10" /></svg>
          </div>
        </div>
        <button class="foottab">Components</button>
      </aside>

      <div class="dialog" role="dialog" aria-label="Measure Data">
        <div class="dlghead">
          <svg class="doc" viewBox="0 0 18 15" aria-hidden="true">
            <rect x=".5" y=".5" width="17" height="14" fill="#f4f4f4" stroke="#8d9399" />
            <rect x="2" y="3" width="7" height="9" fill="#3f8f86" />
            <path d="M10 3H13V12H10Z" fill="#dfe6ea" /><path d="M15.500 3V9" stroke="#4478b8" />
          </svg>
          <span>Measure Data</span>
          <button aria-label="Close dialog"><svg viewBox="0 0 14 14"><path d="M1 1L13 13M13 1L1 13" /></svg></button>
        </div>
        <div class="dlgtext">
          <textarea v-model="measure" readonly aria-label="Measurement"></textarea>
          <div class="vbar">
            <svg viewBox="0 0 12 10"><path d="M2 7L6 3L10 7" /></svg>
            <svg viewBox="0 0 12 10"><path d="M2 3L6 7L10 3" /></svg>
          </div>
        </div>
        <button class="closebtn">Close</button>
        <svg class="grip" viewBox="0 0 14 14"><path d="M1 14L14 1M6 14L14 6M11 14L14 11" /></svg>
      </div>
    </main>

    <footer class="status">
      <span class="msg">Sweep arc length</span>
      <button class="sbtn msgs">
        <svg viewBox="0 0 12 10"><path d="M.5 1.500H4.500L5.500 .5H11.500V9.500H.5Z" fill="#fbe08a" stroke="#a08a50" /><rect x="4.500" y="3.500" width="3" height="4" fill="none" stroke="#555" /></svg>
        Show 0 Messages
      </button>
      <button class="sbtn prog">
        <svg viewBox="0 0 12 10"><path d="M1 3H12V7H1Z" fill="#ccc" /><path d="M1 3H7V6H1Z" fill="#0f0" /><path d="M1 2.500H12M1.500 2V7" fill="none" stroke="#555" /></svg>
        Show Progress
      </button>
      <label v-for="c in coords" :key="c.axis" class="coord"><span>{{ c.axis }}:</span><input v-model="c.value" type="text" /></label>
      <span class="classic abs"><select aria-label="Coordinate mode"><option>Absolute</option></select></span>
      <span class="classic cart"><select aria-label="Coordinate system"><option>Cartesian</option></select></span>
      <span class="unit">mm</span>
    </footer>

    <footer class="taskbar">
      <button class="start" aria-label="Start"><svg viewBox="0 0 20 20"><path d="M0 3L8 2V9.500H0ZM9 1.800L20 0V9.500H9ZM0 10.500H8V18L0 17ZM9 10.500H20V20L9 18.200Z" fill="#fff" /></svg></button>
      <button class="start" aria-label="Task view"><svg viewBox="0 0 20 20"><path d="M.7 0V4H12.300V0M.7 6.500H12.300V14H.7ZM.7 20V16.500H12.300V20M18 0V5M18 11V20" fill="none" stroke="#fff" stroke-width="1.200" /><path d="M16.500 6H19.500V9H16.500Z" fill="#fff" /></svg></button>
      <button v-for="a in apps" :key="a.name" class="app" :class="{ open: a.open, active: a.active }" :aria-label="a.name">
        <svg viewBox="0 0 30 30" v-html="a.art"></svg>
      </button>
      <div class="tray">
        <svg viewBox="0 0 20 20" fill="none" stroke="#fff" stroke-width="1.400"><path d="M2 14L10 6L18 14" /></svg>
        <svg viewBox="0 0 20 20"><path d="M10 0L20 3C20 12 16 17 10 20C4 17 0 12 0 3Z" fill="#2a7df0" /><path d="M10 2L18 4.500C18 11 15 15 10 18C5 15 2 11 2 4.500Z" fill="none" stroke="#fff" stroke-width="1.500" /><path d="M5 7L10 12L15 7" fill="none" stroke="#fff" stroke-width="2.500" /></svg>
        <svg viewBox="0 0 20 20" fill="none" stroke="#fff" stroke-width="1.300"><path d="M4 5.500H18V15.500H4V11" /><rect x="6.500" y="7.500" width="9.500" height="6" fill="#fff" /><path d="M19.500 8V13M1 3V6M4 3V6M0 6H5V9H0ZM2.500 9V14H4" /></svg>
        <svg viewBox="0 0 20 20" fill="none" stroke="#fff" stroke-width="1.300"><path d="M6 4.500H19V14.500H4V8M8 18H16M12 15V18M.7 3H4.500V7H.7ZM2.500 7V18" /></svg>
        <svg viewBox="0 0 20 20" fill="none" stroke="#fff" stroke-width="1.300"><path d="M1 7.500H4L9 3V17L4 12.500H1ZM12 7L18 13M18 7L12 13" /></svg>
        <span class="ime">英</span>
        <svg class="sogou" viewBox="0 0 20 20"><path d="M1 3L16 0L20 15L5 20L1 16Z" fill="#f0562a" /><path d="M15 5C10 3 5 5 6 8C7 11 15 9 14 13C13 16 8 16 5 14" fill="none" stroke="#fff" stroke-width="2.500" /></svg>
        <div class="clock"><span>12:45</span><span>2020/9/25</span></div>
        <div class="notify">
          <svg viewBox="0 0 20 20"><path d="M0 0H20V15H10L5 19V15H0Z" fill="#fff" /><path d="M4 4.500H16M4 7.500H16M4 10.500H16" stroke="#1f3327" /></svg>
          <span>2</span>
        </div>
        <i class="peek"></i>
      </div>
      <div class="watermark">https://blog.csdn.net/weixin_42255190</div>
    </footer>
  </div>
</template>

<style>
html,
body,
#app {
  height: 100%;
}
body {
  overflow: hidden;
}
</style>

<style scoped>
.desktop {
  height: 100%;
  display: flex;
  flex-direction: column;
  background: #f0f0f0;
  color: #1a1a1a;
  font-family: "Noto Sans", "Noto Sans CJK SC", sans-serif;
  font-size: 14px;
  line-height: 20px;
  overflow: hidden;
}
.desktop *,
.desktop *::before,
.desktop *::after {
  box-sizing: border-box;
}
button,
select,
input,
textarea {
  font: inherit;
  color: inherit;
  margin: 0;
  padding: 0;
  border: 0;
  border-radius: 0;
  background: none;
}
svg {
  display: block;
  flex: none;
}
ul {
  list-style: none;
  margin: 0;
  padding: 0;
}

/* title and menu */
.titlebar {
  height: 30px;
  flex: none;
  display: flex;
  align-items: center;
  gap: 5px;
  padding-left: 2px;
  background: #fff;
  color: #000;
}
.logo {
  width: 20px;
  height: 20px;
}
h1 {
  flex: 1;
  margin: 0;
  font-size: 16px;
  font-weight: 400;
  white-space: nowrap;
}
.wincaps {
  display: flex;
  padding-right: 3px;
}
.wincaps button {
  width: 58px;
  height: 28px;
  display: grid;
  place-items: center;
}
.wincaps svg {
  width: 14px;
  height: 14px;
  fill: none;
  stroke: #000;
}
.menubar {
  height: 22px;
  flex: none;
  display: flex;
  align-items: center;
  gap: 14px;
  padding-left: 7px;
  background: #fff;
  color: #000;
  font-size: 16px;
}
.doc {
  width: 19px;
  height: 15px;
}
.menubar .doc {
  margin-right: -6px;
}
.mdi {
  margin-left: auto;
  display: flex;
  gap: 2px;
  padding-right: 1px;
}
.mdi button {
  width: 22px;
  height: 22px;
  border: 1px solid #e3e3e6;
  display: grid;
  place-items: center;
}
.mdi svg {
  width: 10px;
  height: 10px;
  fill: none;
  stroke: #7d8590;
}

/* ribbon */
.ribbon {
  height: 97px;
  flex: none;
  display: flex;
  border: 1px solid #c8c8da;
  background: #efeff2;
  margin-top: 2px;
  padding-top: 5px;
}
.seg {
  display: flex;
  flex: none;
  padding-left: 9px;
  align-items: flex-start;
}
.seg-clip { width: 201px; padding-left: 0; }
.seg-select { width: 150px; padding-left: 8px; }
.seg-vis { width: 68px; }
.seg-zoom { width: 145px; padding-left: 0; }
.seg-fit { width: 117px; }
.seg-shapes { width: 68px; }
.seg-lines { width: 68px; }
.seg-solids { width: 40px; }
.seg-move { width: 82px; }
.seg-along { width: 120px; }
.seg-bool { width: 174px; }
.seg-sweep { width: 38px; }
.seg-fillet { width: 95px; }
.seg-surface { width: 99px; }
.seg-cs { width: 49px; }
.seg-measure { width: 109px; padding-left: 6px; }
.seg-grid { width: 91px; padding-left: 6px; }
.seg-snap { width: 70px; padding-left: 6px; }
.seg-model { width: 109px; padding-left: 7px; }
.seg-clip .col:nth-child(2) { width: 68px; }
.seg-vis .col:first-child,
.seg-shapes .col:first-child,
.seg-lines .col:first-child,
.seg-snap .col { width: 30px; }
.seg-bool .col:first-child { width: 87px; }
.sep {
  width: 1px;
  flex: none;
}
.sep.light {
  background: #c8c8da;
  height: 89px;
  margin-top: -3px;
}
.sep.dark {
  background: #8390a6;
  height: 77px;
  margin-top: 4px;
}
.col {
  display: flex;
  flex-direction: column;
  align-items: flex-start;
}
.item {
  height: 26px;
  display: flex;
  align-items: center;
  gap: 3px;
  white-space: nowrap;
}
.item svg {
  width: 20px;
  height: 20px;
}
.off {
  color: #909094;
}
.on {
  background: #cbcbcb;
}
.seg-measure .item,
.seg-grid .item {
  padding: 0 4px 0 3px;
}
.seg-snap .item {
  width: 30px;
  padding-left: 3px;
}
.caret {
  width: 0;
  border: 4px solid transparent;
  border-top: 5px solid #6b6b6b;
  border-bottom: 0;
  margin: 0 0 4px 3px;
}
.caret.wide {
  border-width: 6px 6px 0;
  margin: 6px 0 0;
}
.big {
  display: flex;
  flex-direction: column;
  align-items: center;
  width: 60px;
  padding: 1px 0 0 2px;
}
.big svg {
  width: 36px;
  height: 36px;
}
.big span {
  margin-top: 9px;
}
.seg-zoom .big {
  width: 59px;
}
.selrow {
  height: 26px;
  display: flex;
  align-items: center;
  gap: 3px;
}
.selrow label {
  width: 43px;
}
.combo {
  position: relative;
  display: block;
  height: 24px;
}
.combo select,
.classic select {
  appearance: none;
  width: 100%;
  height: 100%;
  background: #fff;
  border: 1px solid #d5d5e0;
  padding-left: 1px;
}
.combo::after {
  content: "";
  position: absolute;
  right: 4px;
  top: 9px;
  border: 4px solid transparent;
  border-top: 5px solid #6b6b6b;
  border-bottom: 0;
  pointer-events: none;
}
.combo.kind { width: 92px; }
.combo.plane { width: 80px; }
.combo.tall {
  width: 98px;
  height: 25px;
}

/* ribbon tabs */
.tabs {
  height: 26px;
  flex: none;
  display: flex;
  align-items: flex-start;
  padding-left: 2px;
  color: #444;
  font-size: 15px;
}
.tabs button {
  height: 20px;
  padding: 0 14px;
}
.tabs .active {
  margin-top: -3px;
  height: 26px;
  padding: 1px 13px 0;
  background: #efeff2;
  border: 1px solid #c8c8da;
  border-top: 0;
  color: #0a5ca8;
}
.brand {
  margin-left: auto;
  display: flex;
  gap: 7px;
  padding: 1px 4px 0 0;
}
.brand svg {
  width: 20px;
  height: 20px;
}

/* work area */
.work {
  flex: 1;
  min-height: 0;
  display: flex;
  position: relative;
}
.left {
  width: 272px;
  flex: none;
  display: flex;
  flex-direction: column;
}
.dockhead {
  height: 29px;
  flex: none;
  margin: 0;
  padding: 0 7px 0 4px;
  display: flex;
  align-items: center;
  font-size: 14px;
  font-weight: 400;
  white-space: nowrap;
  background: linear-gradient(#d0d4da, #b4b8be);
  border-bottom: 1px solid #a2a6aa;
}
.projtree {
  height: 359px;
  background: #fff;
  padding-top: 2px;
  overflow: hidden;
}
.projtree b {
  margin-left: -18px;
}
.hscroll {
  height: 20px;
  padding-left: 6px;
}
.hsplit {
  height: 6px;
}
.vsplit {
  width: 6px;
  flex: none;
}
.vsplit,
.hsplit {
  background: radial-gradient(circle at 1px 1px, #34507e 1px, transparent 1px) 0 0 / 4px 4px, #868b93;
}
.propwrap {
  flex: 1;
  min-height: 0;
  display: flex;
  flex-direction: column;
  align-items: flex-start;
  padding: 5px 4px 6px 5px;
}
.propframe {
  flex: 1;
  align-self: stretch;
  padding: 3px 4px 2px 2px;
  border: 1px solid #fff;
  border-right: 2px solid #777;
  border-bottom: 2px solid #777;
}
.propview {
  height: 100%;
  background: #fff;
  border: 1px solid #e3e3e3;
  border-top: 2px solid #696969;
  border-left: 2px solid #696969;
}
table {
  table-layout: fixed;
  width: 253px;
  border-collapse: separate;
  border-spacing: 0;
  font-size: 15px;
  color: #111;
}
th {
  height: 27px;
  width: 44px;
  padding: 0;
  font-weight: 400;
  background: #f0f0f0;
  border: 1px solid #fff;
  border-right: 1px solid #696969;
  border-bottom: 2px solid #696969;
  text-align: center;
  white-space: nowrap;
}
th:first-child { width: 64px; }
th:nth-child(4) { width: 88px; }
th.rest { width: 13px; }
td {
  height: 27px;
  padding: 0 0 0 2px;
  border-right: 1px solid #bfbfbf;
  border-bottom: 1px solid #bfbfbf;
  white-space: nowrap;
  overflow: hidden;
}
td.none {
  border: 0;
}
td.mid {
  padding: 0;
  text-align: center;
}
input[type="checkbox"] {
  appearance: none;
  display: block;
  width: 21px;
  height: 21px;
  margin: 0 auto;
  background: #fff;
  border: 2px solid #777;
  border-right: 1px solid #e3e3e3;
  border-bottom: 1px solid #e3e3e3;
}
input[type="checkbox"]:checked::after {
  content: "";
  display: block;
  width: 6px;
  height: 11px;
  margin: 1px 0 0 5px;
  border: solid #000;
  border-width: 0 3px 3px 0;
  transform: rotate(42deg);
}
.swatch {
  display: block;
  width: 32px;
  height: 19px;
  margin: 0 auto;
  background: #8fae8f;
  border: 1px solid #000;
}
.foottab {
  height: 19px;
  padding: 2px 6px 0 6px;
  line-height: 15px;
  font-size: 16px;
  background: #f0f0f0;
  border-left: 1px solid #fff;
  border-right: 2px solid #777;
  border-bottom: 2px solid #777;
  color: #111;
}
.propwrap .foottab {
  margin-top: -1px;
}
.objtree {
  width: 217px;
  flex: none;
  background: #fff;
  border: solid #777;
  border-width: 2px 0 0 2px;
  box-shadow: 0 -1px 0 #e3e3e3 inset;
  margin-bottom: 1px;
  font-size: 16px;
  color: #000;
}
.objtree li {
  height: 22px;
  line-height: 22px;
  padding-left: 42px;
  white-space: nowrap;
}
.canvas {
  flex: 1;
  min-width: 0;
  margin: 0 1px 1px 4px;
  background: #fff;
  border: solid #696969;
  border-width: 2px 0 0 2px;
  box-shadow: inset 0 -1px 0 #e3e3e3;
  overflow: hidden;
}
.canvas svg {
  width: 100%;
  height: 100%;
}
.axis {
  font: 700 11px "DejaVu Sans Mono", monospace;
}
.scale {
  font: 12px "Liberation Sans", sans-serif;
}
.hints {
  font: 14px "Noto Sans Mono CJK SC", "Liberation Mono", monospace;
  fill: #0000f0;
}
.right {
  width: 150px;
  flex: none;
  display: flex;
  flex-direction: column;
  align-items: flex-start;
  padding-bottom: 6px;
}
.right .dockhead {
  align-self: stretch;
  gap: 10px;
}
.right .dockhead span {
  flex: 1;
}
.right .dockhead svg {
  width: 12px;
  height: 14px;
  fill: none;
  stroke: #666;
}
.compframe {
  flex: 1;
  align-self: stretch;
  margin: 5px 4px 0 5px;
  padding: 3px 5px 3px 2px;
  display: flex;
  flex-direction: column;
  border: 1px solid #fff;
  border-right: 2px solid #777;
  border-bottom: 2px solid #777;
  overflow: hidden;
}
.compframe ul {
  flex: 1;
  background: #fff;
  padding-left: 8px;
  font-size: 16px;
  color: #000;
  overflow: hidden;
}
.compframe li {
  height: 22px;
  display: flex;
  align-items: center;
  white-space: nowrap;
}
.compframe li::before {
  content: "";
  width: 13px;
  height: 22px;
  flex: none;
  border-left: 1px dotted #777;
  border-bottom: 1px dotted #777;
  margin: -22px 2px 0 0;
}
.compframe li.first::before {
  height: 11px;
  margin-top: 11px;
  border-bottom: 0;
  border-top: 1px dotted #777;
}
.compframe li svg {
  width: 16px;
  height: 16px;
  margin-right: 2px;
}
.compframe li span {
  padding: 0 2px;
  line-height: 22px;
}
.first span {
  background: #f0f0f0;
}
.compscroll {
  height: 19px;
  display: flex;
  align-items: center;
  justify-content: space-between;
  padding: 0 7px 0 6px;
}
.compscroll svg {
  width: 8px;
  height: 12px;
  fill: none;
  stroke: #555;
  stroke-width: 2;
}
.compscroll i {
  width: 61px;
  height: 19px;
  margin-right: 26px;
  background: #cdcdcd;
}
.right .foottab {
  margin: -1px 0 0 5px;
}

/* measure dialog */
.dialog {
  position: absolute;
  left: 8px;
  top: 3px;
  width: 323px;
  height: 433px;
  display: flex;
  flex-direction: column;
  background: #f0f0f0;
  border: 1px solid #8f8f8f;
  box-shadow: 2px 3px 12px rgba(0, 0, 0, 0.4);
}
.dlghead {
  height: 36px;
  flex: none;
  display: flex;
  align-items: center;
  gap: 5px;
  padding: 0 14px 2px 7px;
  background: #fff;
  color: #999;
  font-size: 15px;
}
.dlghead span {
  flex: 1;
}
.dlghead button svg {
  width: 14px;
  height: 14px;
  fill: none;
  stroke: #888;
}
.dlgtext {
  flex: 1;
  margin: 13px 13px 12px 11px;
  display: flex;
  border: 1px solid #fff;
  border-top: 2px solid #777;
  border-left: 2px solid #777;
}
.dlgtext textarea {
  flex: 1;
  min-width: 0;
  resize: none;
  padding: 2px 0 0 4px;
  font: 13px/16px "DejaVu Sans Condensed", "DejaVu Sans", sans-serif;
  color: #000;
  outline: 0;
  overflow: hidden;
}
.vbar {
  width: 22px;
  display: flex;
  flex-direction: column;
  justify-content: space-between;
  align-items: center;
  padding: 6px 0;
  border-left: 1px solid #fff;
}
.vbar svg {
  width: 12px;
  height: 10px;
  fill: none;
  stroke: #bdbdbd;
  stroke-width: 2;
}
.closebtn {
  width: 88px;
  height: 28px;
  flex: none;
  margin: 0 0 14px 123px;
  font: 13px "DejaVu Sans Condensed", "DejaVu Sans", sans-serif;
  border: 1px solid #fff;
  border-right: 2px solid #777;
  border-bottom: 2px solid #777;
  color: #000;
}
.grip {
  position: absolute;
  right: 0;
  bottom: 0;
  width: 14px;
  height: 14px;
  stroke: #999;
  stroke-width: 2;
}

/* status bar */
.status {
  height: 30px;
  flex: none;
  display: flex;
  align-items: center;
  padding-left: 4px;
  background: #cdd4dc;
  overflow: hidden;
}
.msg {
  flex: 1;
  padding-top: 2px;
  white-space: nowrap;
}
.sbtn {
  height: 26px;
  flex: none;
  display: flex;
  align-items: center;
  gap: 10px;
  padding-left: 6px;
  margin-right: 4px;
  margin-top: 2px;
  white-space: nowrap;
  border: 1px solid #adadad;
  background: #e1e1e1;
  font: 13px "Liberation Mono", monospace;
  color: #000;
}
.sbtn svg {
  width: 12px;
  height: 10px;
}
.msgs { width: 159px; }
.prog { width: 143px; }
.coord {
  display: flex;
  flex: none;
  align-items: center;
  width: 97px;
}
.coord span {
  width: 40px;
  color: #777;
}
.coord input {
  width: 54px;
  height: 28px;
  margin-top: 2px;
  padding: 0 0 3px 2px;
  background: #fff;
  border: 1px solid #555;
  color: #000;
}
.classic {
  position: relative;
  flex: none;
  height: 27px;
  align-self: flex-start;
}
.classic select {
  border: 2px solid #777;
  border-right: 1px solid #fff;
  border-bottom: 1px solid #fff;
  color: #000;
}
.classic::before {
  content: "";
  position: absolute;
  right: 2px;
  top: 2px;
  bottom: 2px;
  width: 20px;
  background: #f0f0f0;
  border: 1px solid #fff;
  border-right-color: #666;
  border-bottom-color: #666;
  pointer-events: none;
}
.classic::after {
  content: "";
  position: absolute;
  right: 7px;
  top: 11px;
  border: 5px solid transparent;
  border-top-color: #000;
  border-bottom: 0;
  pointer-events: none;
}
.abs {
  width: 62px;
  margin-right: 4px;
}
.cart {
  width: 73px;
}
.unit {
  width: 31px;
  padding: 2px 0 0 4px;
  color: #777;
}

/* taskbar */
.taskbar {
  height: 50px;
  flex: none;
  display: flex;
  position: relative;
  background: #1f3327;
  color: #fff;
}
.start {
  width: 60px;
  display: grid;
  place-items: center;
}
.start svg {
  width: 20px;
  height: 20px;
}
.app {
  width: 62px;
  display: flex;
  flex-direction: column;
  align-items: center;
  padding-top: 10px;
}
.start + .app {
  margin-left: 3px;
}
.app svg {
  width: 30px;
  height: 30px;
}
.app.open::after {
  content: "";
  width: 51px;
  height: 3px;
  margin-top: 7px;
  background: #66b868;
}
.app.active {
  background: #4a5d51;
}
.app.active::after {
  width: 62px;
}
.tray {
  margin-left: auto;
  display: flex;
  align-items: center;
  gap: 10px;
}
.tray svg {
  width: 20px;
  height: 20px;
}
.ime {
  width: 20px;
  font-size: 17px;
  text-align: center;
}
.tray .sogou {
  margin: 0 11px 0 4px;
}
.clock {
  width: 80px;
  display: flex;
  flex-direction: column;
  align-items: center;
  font-size: 15px;
  line-height: 23px;
}
.notify {
  position: relative;
  margin: 0 14px 0 12px;
}
.notify span {
  position: absolute;
  left: 9px;
  top: 8px;
  width: 20px;
  height: 20px;
  border-radius: 50%;
  border: 1px solid #999;
  background: #2b2f2e;
  font-size: 12px;
  font-weight: 700;
  line-height: 18px;
  text-align: center;
}
.peek {
  width: 6px;
  height: 50px;
  border-left: 1px solid #6c7a71;
}
.watermark {
  position: absolute;
  right: 10px;
  top: 20px;
  font: 16px/22px "Liberation Sans", sans-serif;
  color: rgba(255, 255, 255, 0.6);
  pointer-events: none;
}
</style>
